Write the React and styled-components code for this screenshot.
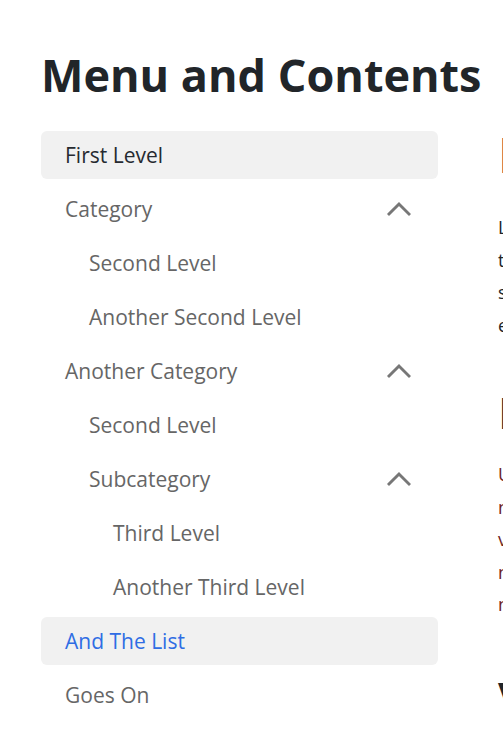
import React from 'react';
import styled, { createGlobalStyle } from 'styled-components';

const GlobalStyle = createGlobalStyle`
  html, body {
    margin: 0;
    padding: 0;
    background: #ffffff;
    overflow: hidden;
  }
  body {
    font-family: "Open Sans", "Noto Sans", sans-serif;
    color: #212529;
  }
`;

const Page = styled.div`
  padding: 48px 0 0 41px;
  width: 1100px;
`;

const Title = styled.h1`
  margin: 0 0 29px;
  font-size: 45px;
  line-height: 1.2;
  font-weight: 700;
  color: #212529;
  letter-spacing: 0;
`;

const Layout = styled.div`
  display: grid;
  grid-template-columns: 397px 560px;
  column-gap: 60px;
  align-items: start;
`;

const Nav = styled.nav`
  display: flex;
  flex-direction: column;
  gap: 6px;
`;

const Item = styled.a`
  display: flex;
  align-items: center;
  justify-content: space-between;
  height: 48px;
  padding: 0 27px 0 ${(p) => 24 + p.$depth * 24}px;
  border-radius: 6px;
  font-size: 21px;
  text-decoration: none;
  cursor: pointer;
  background: ${(p) => (p.$highlight ? '#f1f1f1' : 'transparent')};
  color: ${(p) => (p.$active ? '#2f6de4' : p.$strong ? '#262a30' : '#666666')};
`;

const Chevron = styled.svg`
  width: 24px;
  height: 24px;
  flex-shrink: 0;
`;

const Content = styled.article`
  min-width: 0;
`;

const SectionTitle = styled.h2`
  margin: 0 0 32px;
  font-size: 48px;
  line-height: 1;
  font-weight: 600;
  color: #6e1c1c;
`;

const SubTitle = styled.h3`
  margin: ${(p) => p.$top}px 0 24px;
  font-size: 44px;
  line-height: 1;
  font-weight: 600;
  color: #212529;
`;

const Paragraph = styled.p`
  margin: 0;
  font-size: 18px;
  line-height: 32.5px;
  color: ${(p) => p.$color || '#212529'};
`;

function ChevronUp() {
  return (
    <Chevron viewBox="0 0 24 24" fill="none">
      <polyline
        points="2,17 12,7 22,17"
        stroke="#777777"
        strokeWidth="3"
        strokeLinecap="square"
        strokeLinejoin="miter"
      />
    </Chevron>
  );
}

const menu = [
  { label: 'First Level', depth: 0, highlight: true, strong: true },
  { label: 'Category', depth: 0, toggle: true },
  { label: 'Second Level', depth: 1 },
  { label: 'Another Second Level', depth: 1 },
  { label: 'Another Category', depth: 0, toggle: true },
  { label: 'Second Level', depth: 1 },
  { label: 'Subcategory', depth: 1, toggle: true },
  { label: 'Third Level', depth: 2 },
  { label: 'Another Third Level', depth: 2 },
  { label: 'And The List', depth: 0, highlight: true, active: true },
  { label: 'Goes On', depth: 0 },
];

export default function App() {
  return (
    <>
      <GlobalStyle />
      <Page>
        <Title>Menu and Contents</Title>
        <Layout>
          <Nav>
            {menu.map((item, i) => (
              <Item
                key={i}
                $depth={item.depth}
                $highlight={item.highlight}
                $active={item.active}
                $strong={item.strong}
              >
                <span>{item.label}</span>
                {item.toggle && <ChevronUp />}
              </Item>
            ))}
          </Nav>
          <Content>
            <SectionTitle>Introduction</SectionTitle>
            <Paragraph>
              Lorem ipsum dolor sit amet, consectetur adipiscing elit, sed do
              <br />
              tempor incididunt ut labore et dolore magna aliqua. Ut enim ad
              <br />
              sed quis nostrud exercitation ullamco laboris nisi ut aliquip ex
              <br />
              ea commodo consequat. Duis aute irure dolor in reprehenderit.
            </Paragraph>
            <SubTitle $top={49}>Details</SubTitle>
            <Paragraph $color="#6e2323">
              Ut enim ad minim veniam, quis nostrud exercitation ullamco
              <br />
              nisi ut aliquip ex ea commodo consequat. Duis aute irure dolor
              <br />
              voluptate velit esse cillum dolore eu fugiat nulla pariatur.
              <br />
              non proident, sunt in culpa qui officia deserunt mollit anim
              <br />
              nostrum exercitationem ullam corporis suscipit laboriosam.
            </Paragraph>
            <SubTitle $top={54}>Variations</SubTitle>
          </Content>
        </Layout>
      </Page>
    </>
  );
}
